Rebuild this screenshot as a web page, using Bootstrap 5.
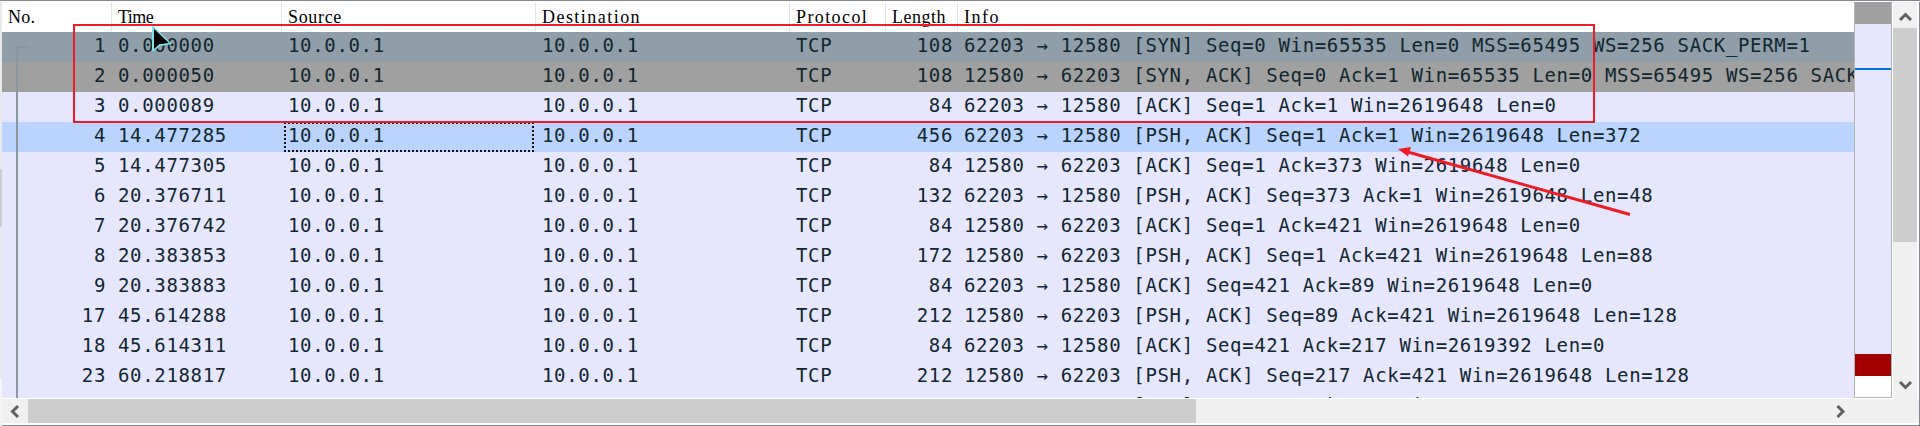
<!DOCTYPE html>
<html lang="en">
<head>
<meta charset="utf-8">
<title>Packet list</title>
<link href="https://cdn.jsdelivr.net/npm/bootstrap@5.3.0/dist/css/bootstrap.min.css" rel="stylesheet">
<style>
body{width:1920px;height:426px;background:#f0f0f0}
.frame{height:426px;border-top:1px solid #828790;padding-top:1px;background:#fff}
.edge{width:2px;background:linear-gradient(#e9e9ec 0 167px,#cdcdd2 167px 225px,#e9e9ec 225px 376px,#f4f4f4 376px)}
.pane{border-right:1px solid #828790;border-bottom:1px solid #828790}
.upper{height:397px}
.plist{width:1852px;height:396px}
.cols{display:grid;grid-template-columns:110px 170px 254px 254px 96px 72px 1fr}
.hd{height:30px;background:#fff;color:#000;font:18px/31px "Liberation Serif",serif}
.hd>div{border-right:1px solid #e5e5e5;padding-left:6px;white-space:nowrap}
.hd>div:last-child{border:0}
.ls-no{letter-spacing:.2px}.ls-time{letter-spacing:-.55px}.ls-src{letter-spacing:.67px}
.ls-dst{letter-spacing:1.46px}.ls-proto{letter-spacing:1.4px}.ls-len{letter-spacing:.5px}.ls-info{letter-spacing:1.5px}
.pk{height:30px;flex:none;background:#e7e6ff;color:#12272e;font:19px/27px "DejaVu Sans Mono",monospace;letter-spacing:.655px;white-space:pre}
.pk>div{padding-left:6px;overflow:hidden}
.pk>.num{text-align:right;padding:0 6px 0 0}
.pk>.num:nth-child(6){padding-right:5px}
.syn{background:#909ea9}.synack{background:#a0a0a0}.sel{background:#bad3ff}
.focus{position:relative}
.focus::after{content:"";position:absolute;inset:0 2px 0 2px;border:2px dotted #111}
.mini{width:38px;height:396px;border:1px solid #b4b4b4;border-top:0;background:#fff}
.vbar{width:24px;height:397px;background:#f0f0f0;margin-left:1px}
.thumb{background:#cdcdcd}
.hbar{height:24px;background:#f0f0f0}
svg{display:block}
.lay{position:absolute;left:0;top:0}
</style>
</head>
<body class="overflow-hidden position-relative">
<div class="frame d-flex">
  <div class="edge"></div>
  <div class="pane flex-grow-1">
    <div class="upper d-flex">
      <div class="plist overflow-hidden d-flex flex-column" id="plist">
        <div class="cols hd">
          <div class="ls-no">No.</div><div class="ls-time">Time</div><div class="ls-src">Source</div><div class="ls-dst">Destination</div><div class="ls-proto">Protocol</div><div class="ls-len">Length</div><div class="ls-info">Info</div>
        </div>
      </div>
      <div class="mini">
        <div style="height:22px;background:#a0a0a0"></div>
        <div style="height:44px;background:#e7e6ff"></div>
        <div style="height:2px;background:#0078d7"></div>
        <div style="height:284px;background:#e7e6ff"></div>
        <div style="height:22px;background:#a40000"></div>
      </div>
      <div class="vbar d-flex flex-column">
        <svg width="24" height="26"><path d="M7 18l5.500-5.500L18 18" fill="none" stroke="#606060" stroke-width="3"/></svg>
        <div class="thumb" style="height:214px"></div>
        <svg class="mt-auto" width="24" height="38"><path d="M7 21l5.500 5.500L18 21" fill="none" stroke="#606060" stroke-width="3"/></svg>
      </div>
    </div>
    <div class="hbar d-flex">
      <svg width="26" height="24"><path d="M16 7l-5.500 5.500L16 18" fill="none" stroke="#606060" stroke-width="3"/></svg>
      <div class="thumb" style="width:1168px"></div>
      <svg class="ms-auto" width="85" height="24"><path d="M3.500 7l5.500 5.500L3.500 18" fill="none" stroke="#606060" stroke-width="3"/></svg>
    </div>
  </div>
</div>
<svg class="lay" width="1920" height="426">
  <path d="M30 47H17V398" fill="none" stroke="#8a979e" stroke-width="2"/>
  <rect x="74" y="25" width="1520" height="97" fill="none" stroke="#ed1c24" stroke-width="2"/>
  <path d="M1406 151.500L1630 214.500" stroke="#ed1c24" stroke-width="3"/>
  <path d="M1398 149L1411 147L1408 156.500Z" fill="#ed1c24"/>
  <path d="M153 27V50.500L159.500 45L170 43.500Z" fill="#000" stroke="#7fe3e6" stroke-width="2" stroke-linejoin="round"/>
  <path d="M154 29V49L159.500 44L169 43Z" fill="#000"/>
</svg>
<script>
const packets=[
["1","0.000000","108","62203 → 12580 [SYN] Seq=0 Win=65535 Len=0 MSS=65495 WS=256 SACK_PERM=1","syn"],
["2","0.000050","108","12580 → 62203 [SYN, ACK] Seq=0 Ack=1 Win=65535 Len=0 MSS=65495 WS=256 SACK_PERM=1","synack"],
["3","0.000089","84","62203 → 12580 [ACK] Seq=1 Ack=1 Win=2619648 Len=0",""],
["4","14.477285","456","62203 → 12580 [PSH, ACK] Seq=1 Ack=1 Win=2619648 Len=372","sel"],
["5","14.477305","84","12580 → 62203 [ACK] Seq=1 Ack=373 Win=2619648 Len=0",""],
["6","20.376711","132","62203 → 12580 [PSH, ACK] Seq=373 Ack=1 Win=2619648 Len=48",""],
["7","20.376742","84","12580 → 62203 [ACK] Seq=1 Ack=421 Win=2619648 Len=0",""],
["8","20.383853","172","12580 → 62203 [PSH, ACK] Seq=1 Ack=421 Win=2619648 Len=88",""],
["9","20.383883","84","62203 → 12580 [ACK] Seq=421 Ack=89 Win=2619648 Len=0",""],
["17","45.614288","212","12580 → 62203 [PSH, ACK] Seq=89 Ack=421 Win=2619648 Len=128",""],
["18","45.614311","84","62203 → 12580 [ACK] Seq=421 Ack=217 Win=2619392 Len=0",""],
["23","60.218817","212","12580 → 62203 [PSH, ACK] Seq=217 Ack=421 Win=2619648 Len=128",""],
["","","","62203 → 12580 [ACK] Seq=421 Ack=345 Win=2619392 Len=0",""]];
const list=document.getElementById("plist");
packets.forEach(p=>{
  const ip=p[0]?"10.0.0.1":"", cells=[p[0],p[1],ip,ip,ip?"TCP":"",p[2],p[3]];
  const row=document.createElement("div");
  row.className="cols pk "+p[4];
  cells.forEach((t,i)=>{
    const c=document.createElement("div");
    c.textContent=t;
    if(i===0||i===5)c.className="num";
    if(i===2&&p[4]==="sel")c.className="focus";
    row.append(c);
  });
  list.append(row);
});
</script>
<script src="https://cdn.jsdelivr.net/npm/bootstrap@5.3.0/dist/js/bootstrap.bundle.min.js"></script>
</body>
</html>
